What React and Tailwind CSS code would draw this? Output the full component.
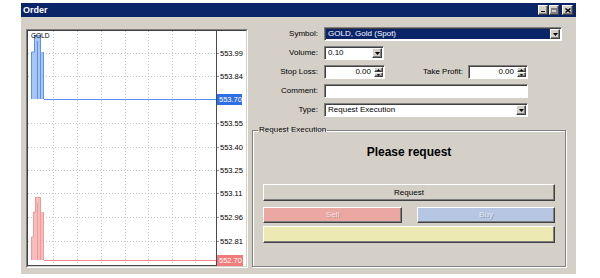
import React from "react";

const raised =
  "border border-t-white border-l-white border-r-[#404040] border-b-[#404040] shadow-[inset_-1px_-1px_0_#808080]";
const sunken =
  "border border-t-[#808080] border-l-[#808080] border-r-white border-b-white shadow-[inset_1px_1px_0_#404040]";

function DownTri() {
  return (
    <svg width="5" height="3" viewBox="0 0 5 3">
      <path d="M0 0H5L2.5 3Z" fill="#000" />
    </svg>
  );
}

function DropBtn() {
  return (
    <div className={`w-[10px] h-full flex items-center justify-center bg-[#d4d0c8] ${raised}`}>
      <DownTri />
    </div>
  );
}

function Spinner() {
  return (
    <div className="w-[9px] h-full flex flex-col">
      <div className={`flex-1 flex items-center justify-center bg-[#d4d0c8] ${raised}`}>
        <svg width="3" height="2" viewBox="0 0 3 2">
          <path d="M0 2H3L1.5 0Z" fill="#000" />
        </svg>
      </div>
      <div className={`flex-1 flex items-center justify-center bg-[#d4d0c8] ${raised}`}>
        <svg width="3" height="2" viewBox="0 0 3 2">
          <path d="M0 0H3L1.5 2Z" fill="#000" />
        </svg>
      </div>
    </div>
  );
}

function TitleBar() {
  return (
    <div className="h-[14px] bg-[#0a246a] flex items-center pl-[2px] pr-[3px]">
      <div className="text-white font-bold text-[9px]">Order</div>
      <div className="ml-auto flex items-center">
        <div className={`w-[10px] h-[10px] bg-[#d4d0c8] ${raised} flex items-end justify-center pb-[2px]`}>
          <div className="w-[4px] h-[1px] bg-black" />
        </div>
        <div className={`ml-[1px] w-[10px] h-[10px] bg-[#d4d0c8] ${raised} flex items-center justify-center`}>
          <div className="w-[6px] h-[5px] border border-t-2 border-[#808080]" />
        </div>
        <div className={`ml-[3px] w-[11px] h-[10px] bg-[#d4d0c8] ${raised} flex items-center justify-center`}>
          <svg width="6" height="5" viewBox="0 0 6 5">
            <path d="M0.5 0.5L5.5 4.5M5.5 0.5L0.5 4.5" stroke="#000" strokeWidth="1.4" />
          </svg>
        </div>
      </div>
    </div>
  );
}

function Chart() {
  const hGrid = [22, 45, 92, 116, 139, 162, 186, 210];
  const vGrid = [25, 49, 73, 97, 120, 144, 167];
  const labels = [
    [22, "553.99"],
    [45, "553.84"],
    [92, "553.55"],
    [116, "553.40"],
    [139, "553.25"],
    [162, "553.11"],
    [186, "552.96"],
    [210, "552.81"],
  ];
  const ff = "'Liberation Sans', Arial, sans-serif";
  return (
    <div className="ml-[5px] mt-[12px] w-[222px] h-[239px] border border-t-[#808080] border-l-[#808080] border-r-white border-b-white">
      <div className="w-full h-full border border-t-[#404040] border-l-[#404040] border-r-[#d4d0c8] border-b-[#d4d0c8] bg-white">
        <svg width="218" height="235" viewBox="0 0 218 235" style={{ display: "block" }}>
          {hGrid.map((y) => (
            <line key={"h" + y} x1="0" x2="188" y1={y + 0.5} y2={y + 0.5} stroke="#c4c4c4" strokeDasharray="1 2" />
          ))}
          {vGrid.map((x) => (
            <line key={"v" + x} x1={x + 0.5} x2={x + 0.5} y1="0" y2="234" stroke="#c4c4c4" strokeDasharray="1 2" />
          ))}
          {hGrid.map((y) => (
            <line key={"t" + y} x1="189" x2="191" y1={y + 0.5} y2={y + 0.5} stroke="#8a8a8a" />
          ))}
          {/* blue spike */}
          <polygon points="3,68 3,21 6,21 6,4 13,4 13,21 16,21 16,68" fill="#a8c5f5" />
          <path d="M3.5 68V21H6.5V4.5H12.5V68M9.5 10V68M15.5 21V68" fill="none" stroke="#5a92ee" strokeWidth="1" />
          <rect x="16" y="68" width="172" height="1" fill="#5591f0" />
          {/* red spike */}
          <polygon points="3,229 3,206 5,206 5,181 7,181 7,166 13,166 13,181 16,181 16,229" fill="#f6bcbc" />
          <path d="M3.5 229V206H5.5V181H7.5V166.5H12.5V229M9.5 172V229M15.5 181V229" fill="none" stroke="#f29a9a" strokeWidth="1" />
          <rect x="16" y="229" width="172" height="1" fill="#f08a8a" />
          {/* axes */}
          <line x1="188.5" x2="188.5" y1="0" y2="235" stroke="#4a4a4a" />
          <line x1="0" x2="189" y1="234.5" y2="234.5" stroke="#4a4a4a" />
          <text x="3" y="7" fontSize="6.5" fontFamily={ff} fill="#000">GOLD</text>
          {labels.map(([y, t]) => (
            <text key={t} x="192" y={y + 3} fontSize="7.5" fontFamily={ff} fill="#000">
              {t}
            </text>
          ))}
          <rect x="189" y="63" width="25" height="11" fill="#2f6fe6" />
          <text x="191" y="71" fontSize="7.5" fontFamily={ff} fill="#fff">553.70</text>
          <rect x="189" y="224" width="26" height="11" fill="#f27b7b" />
          <text x="191" y="232" fontSize="7.5" fontFamily={ff} fill="#fff">552.70</text>
        </svg>
      </div>
    </div>
  );
}

function Label({ children, w = "w-[66px]" }) {
  return <div className={`${w} text-right pr-0`}>{children}</div>;
}

function Form() {
  return (
    <div className="ml-[4px] w-[314px] pt-[10px] flex flex-col">
      <div className="flex flex-col gap-[5px]">
        <div className="flex items-center h-[14px]">
          <Label>Symbol:</Label>
          <div className={`ml-[6px] w-[238px] h-[14px] bg-white flex p-[1px] ${sunken}`}>
            <div className="flex-1 bg-[#0a246a] text-white flex items-center pl-[2px]">GOLD, Gold (Spot)</div>
            <DropBtn />
          </div>
        </div>
        <div className="flex items-center h-[14px]">
          <Label>Volume:</Label>
          <div className={`ml-[6px] w-[60px] h-[14px] bg-white flex p-[1px] ${sunken}`}>
            <div className="flex-1 flex items-center pl-[2px]">0.10</div>
            <DropBtn />
          </div>
        </div>
        <div className="flex items-center h-[14px]">
          <Label>Stop Loss:</Label>
          <div className={`ml-[6px] w-[61px] h-[14px] bg-white flex p-[1px] ${sunken}`}>
            <div className="flex-1 flex items-center justify-end pr-[3px]">0.00</div>
            <Spinner />
          </div>
          <div className="w-[78px] text-right">Take Profit:</div>
          <div className={`ml-[5px] w-[60px] h-[14px] bg-white flex p-[1px] ${sunken}`}>
            <div className="flex-1 flex items-center justify-end pr-[3px]">0.00</div>
            <Spinner />
          </div>
        </div>
        <div className="flex items-center h-[14px]">
          <Label>Comment:</Label>
          <div className={`ml-[6px] w-[204px] h-[14px] bg-white ${sunken}`} />
        </div>
        <div className="flex items-center h-[14px]">
          <Label>Type:</Label>
          <div className={`ml-[6px] w-[204px] h-[14px] bg-white flex p-[1px] ${sunken}`}>
            <div className="flex-1 flex items-center pl-[2px]">Request Execution</div>
            <DropBtn />
          </div>
        </div>
      </div>
      <fieldset className="mt-[9px] w-[314px] h-[141px] border border-[#808080] shadow-[inset_1px_1px_0_#fff,1px_1px_0_#fff] px-[10px]">
        <legend className="ml-[-5px] px-[1px] leading-none">Request Execution</legend>
        <div className="mt-[12px] text-center font-bold text-[12px] leading-none">Please request</div>
        <div className={`mt-[26px] h-[17px] bg-[#d4d0c8] flex items-center justify-center ${raised}`}>Request</div>
        <div className="mt-[6px] flex justify-between">
          <div className={`w-[139px] h-[16px] bg-[#eba8a3] flex items-center justify-center text-[#f8e2e0] [text-shadow:1px_1px_0_#c99490] ${raised}`}>
            Sell
          </div>
          <div className={`w-[138px] h-[16px] bg-[#b6c6e3] flex items-center justify-center text-[#e4ebf6] [text-shadow:1px_1px_0_#8e9dba] ${raised}`}>
            Buy
          </div>
        </div>
        <div className={`mt-[3px] h-[17px] bg-[#ece9b3] ${raised}`} />
      </fieldset>
    </div>
  );
}

export default function App() {
  return (
    <div className="w-[600px] h-[278px] bg-white pl-[21px] pt-[3px] font-['Liberation_Sans',Arial,sans-serif] text-[8px] text-black leading-none">
      <div className="w-[555px] h-[271px] flex flex-col bg-[#d4d0c8]">
        <TitleBar />
        <div className="flex flex-1">
          <Chart />
          <Form />
        </div>
      </div>
    </div>
  );
}
